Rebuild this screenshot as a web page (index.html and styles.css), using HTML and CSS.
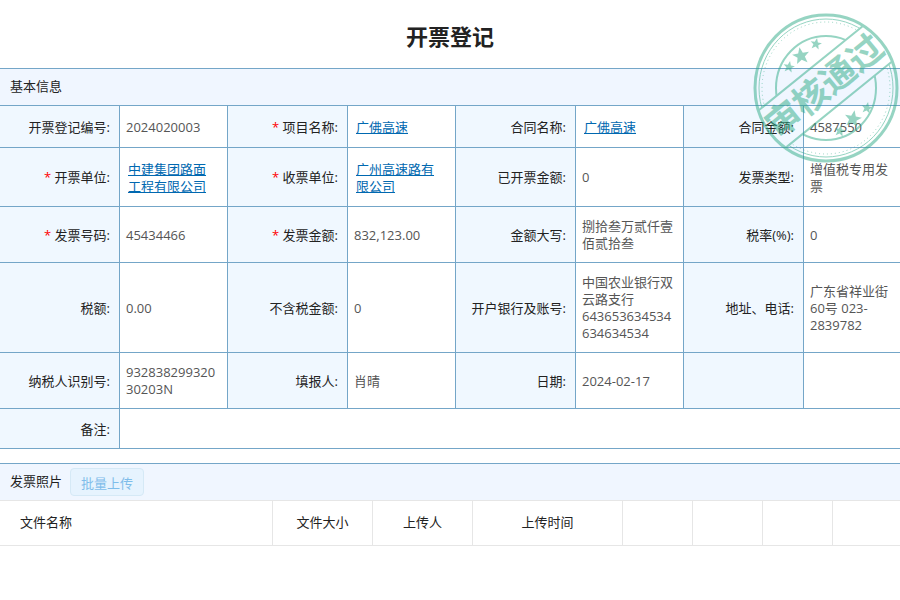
FILE: index.html
```html
<!DOCTYPE html>
<html lang="zh-CN">
  <head>
    <meta charset="UTF-8">
    <title>开票登记</title>
    <link rel="stylesheet" href="styles.css">
  </head>
  <body>
    <div class="page">
      <h1>开票登记</h1>

      <!-- 基本信息 -->
      <div class="section">
        <div class="section-title">
          <h2>基本信息</h2>
        </div>
        <table class="info">
          <colgroup>
            <col class="c-label"><col class="c-value">
            <col class="c-label"><col class="c-value">
            <col class="c-label"><col class="c-value">
            <col class="c-label"><col>
          </colgroup>
          <tr>
            <th>开票登记编号:</th>
            <td>2024020003</td>
            <th><span class="required">*</span> 项目名称:</th>
            <td><a href="#">广佛高速</a></td>
            <th>合同名称:</th>
            <td><a href="#">广佛高速</a></td>
            <th>合同金额:</th>
            <td>4587550</td>
          </tr>
          <tr>
            <th><span class="required">*</span> 开票单位:</th>
            <td><a href="#">中建集团路面工程有限公司</a></td>
            <th><span class="required">*</span> 收票单位:</th>
            <td><a href="#">广州高速路有限公司</a></td>
            <th>已开票金额:</th>
            <td>0</td>
            <th>发票类型:</th>
            <td>增值税专用发票</td>
          </tr>
          <tr>
            <th><span class="required">*</span> 发票号码:</th>
            <td>45434466</td>
            <th><span class="required">*</span> 发票金额:</th>
            <td>832,123.00</td>
            <th>金额大写:</th>
            <td>捌拾叁万贰仟壹佰贰拾叁</td>
            <th>税率(%):</th>
            <td>0</td>
          </tr>
          <tr>
            <th>税额:</th>
            <td>0.00</td>
            <th>不含税金额:</th>
            <td>0</td>
            <th>开户银行及账号:</th>
            <td>中国农业银行双云路支行643653634534634634534</td>
            <th>地址、电话:</th>
            <td>广东省祥业街60号 023-2839782</td>
          </tr>
          <tr>
            <th>纳税人识别号:</th>
            <td>93283829932030203N</td>
            <th>填报人:</th>
            <td>肖晴</td>
            <th>日期:</th>
            <td>2024-02-17</td>
            <th></th>
            <td></td>
          </tr>
          <tr class="remark">
            <th>备注:</th>
            <td colspan="7"></td>
          </tr>
        </table>
      </div>

      <!-- 发票照片 -->
      <div class="section">
        <div class="section-title">
          <h2>发票照片</h2>
          <button type="button" disabled>批量上传</button>
        </div>
        <table class="files">
          <colgroup>
            <col>
            <col class="c-100">
            <col class="c-100">
            <col class="c-150">
            <col class="c-70">
            <col class="c-70">
            <col class="c-70">
            <col class="c-67">
          </colgroup>
          <tr>
            <th class="name">文件名称</th>
            <th>文件大小</th>
            <th>上传人</th>
            <th>上传时间</th>
            <th></th>
            <th></th>
            <th></th>
            <th></th>
          </tr>
        </table>
      </div>

      <!-- 审核章 -->
      <svg class="stamp" viewBox="-74 -76 148 152" role="img" aria-label="审核通过">
        <defs>
          <clipPath id="outside">
            <path transform="rotate(-39)" d="M-80-80H80V-25H-80ZM-80 21H80V80H-80Z"></path>
          </clipPath>
          <path id="star" d="M0-10 2.6-3.2 9.5-3.1 4.1 1.3 5.9 8.1 0 4.2-5.9 8.1-4.1 1.3-9.5-3.1-2.6-3.2Z"></path>
        </defs>
        <ellipse class="ring" rx="71" ry="73" stroke-width="3"></ellipse>
        <g clip-path="url(#outside)">
          <ellipse class="ring" rx="67" ry="69" stroke-width="1"></ellipse>
          <ellipse class="ring" rx="64" ry="66" stroke-width="1" stroke-dasharray="1 3"></ellipse>
          <ellipse class="ring" rx="50" ry="52" stroke-width="2"></ellipse>
        </g>
        <g transform="rotate(-39)">
          <path class="ring" d="M-67-25H67M-68 21H68" stroke-width="2"></path>
          <text x="0" y="10">审核通过</text>
        </g>
        <use href="#star" transform="translate(-25 -32) rotate(-10) scale(.9)"></use>
        <use href="#star" transform="translate(-10 -44) rotate(10) scale(.6)"></use>
        <use href="#star" transform="translate(-37 -21) rotate(10) scale(.6)"></use>
        <use href="#star" transform="translate(27 31) rotate(10) scale(.9)"></use>
        <use href="#star" transform="translate(41 20) rotate(10) scale(.6)"></use>
        <use href="#star" transform="translate(14 43) rotate(10) scale(.6)"></use>
      </svg>
    </div>
  </body>
</html>
```
FILE: styles.css
```css
body {
  margin: 0;
  background-color: #ffffff;
  color: #222222;
  font-family: "Open Sans", "Noto Sans CJK SC", sans-serif;
  font-size: 13px;
  line-height: 17px;
}

.page {
  position: relative;
  overflow: hidden;
}

h1 {
  margin: 0;
  padding: 21px 0 17px;
  text-align: center;
  font-size: 22px;
  line-height: 30px;
}

h2 {
  margin: 0;
  padding-bottom: 2px;
  font-size: 13px;
  font-weight: normal;
}

.section {
  margin-bottom: 14px;
  border-top: 1px solid #74a6c8;
}

.section-title {
  display: flex;
  align-items: center;
  gap: 8px;
  height: 36px;
  padding: 0 10px;
  background-color: #f0f6ff;
}

table {
  width: 100%;
  table-layout: fixed;
  border-collapse: separate;
  border-spacing: 0;
}

th {
  font-weight: normal;
}

.info {
  border-top: 1px solid #74a6c8;
}

.info th,
.info td {
  border-right: 1px solid #74a6c8;
  border-bottom: 1px solid #74a6c8;
  word-break: break-word;
}

.info th {
  padding: 11px 9px 10px 8px;
  background-color: #f0f8ff;
  text-align: right;
}

.info td {
  padding: 11px 6px 10px;
  color: #555555;
}

.info td:last-child {
  border-right: none;
}

.info a {
  display: block;
  padding: 2px 6px 1px 2px;
  color: #0068b0;
}

.info .remark th {
  height: 18px;
}

.c-label {
  width: 120px;
}

.c-value {
  width: 12%;
}

.required {
  color: #ff0000;
}

button {
  height: 28px;
  padding: 0 10px;
  border: 1px solid #d5e9f6;
  border-radius: 4px;
  background-color: #e6f3fe;
  color: #7fbdea;
  font-family: inherit;
  font-size: 13px;
}

.files {
  border-top: 1px solid #e6e6e6;
}

.files th {
  height: 42px;
  padding: 0 0 2px;
  border-right: 1px solid #e6e6e6;
  border-bottom: 1px solid #e6e6e6;
}

.files th:last-child {
  border-right: none;
}

.files .name {
  padding-left: 20px;
  text-align: left;
}

.c-67 {
  width: 67px;
}

.c-70 {
  width: 70px;
}

.c-100 {
  width: 100px;
}

.c-150 {
  width: 150px;
}

/* stamp lies over the form */
.stamp {
  position: absolute;
  top: 12px;
  right: 0;
  width: 148px;
  height: 152px;
  fill: #2fab87;
  opacity: 0.5;
  pointer-events: none;
}

.stamp .ring {
  fill: none;
  stroke: #2fab87;
}

.stamp text {
  font-size: 35px;
  font-weight: 700;
  text-anchor: middle;
}
```
